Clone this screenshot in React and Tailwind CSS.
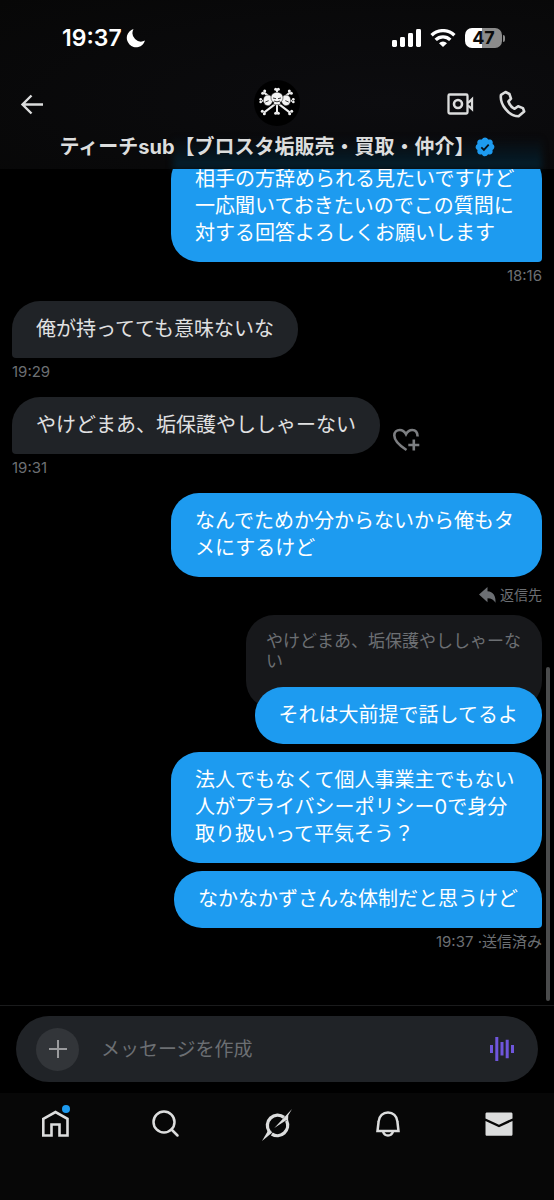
import React, { useState } from 'react';

const messages = [
  { id: 1, mine: true, tail: true, text: '相手の方辞められる見たいですけど一応聞いておきたいのでこの質問に対する回答よろしくお願いします', meta: '18:16' },
  { id: 2, mine: false, tail: true, text: '俺が持ってても意味ないな', meta: '19:29' },
  { id: 3, mine: false, tail: true, text: 'やけどまあ、垢保護やししゃーない', meta: '19:31', react: true },
  { id: 4, mine: true, text: 'なんでためか分からないから俺もタメにするけど' },
  { id: 5, mine: true, text: 'それは大前提で話してるよ', quote: 'やけどまあ、垢保護やししゃーない' },
  { id: 6, mine: true, text: '法人でもなくて個人事業主でもない人がプライバシーポリシー0で身分取り扱いって平気そう？' },
  { id: 7, mine: true, tail: true, text: 'なかなかずさんな体制だと思うけど', meta: '19:37 ·送信済み' },
];

function StatusBar() {
  return (
    <div className="flex h-[76px] items-center justify-between pr-[49px] pl-[62px] text-white">
      <div className="flex items-center gap-1">
        <span className="text-[23px] leading-7 font-semibold">19:37</span>
        <svg width="20" height="20" viewBox="0 0 20 20" fill="currentColor">
          <path d="M7.5 1A9.3 9.3 0 1 0 19 12.6 8.6 8.6 0 0 1 7.5 1Z" />
        </svg>
      </div>
      <div className="flex items-center gap-[9px]">
        <svg width="29" height="18" viewBox="0 0 29 18" fill="currentColor">
          <rect x="0" y="11" width="5" height="7" rx="1.4" />
          <rect x="8" y="8" width="5" height="10" rx="1.4" />
          <rect x="16" y="4" width="5" height="14" rx="1.4" />
          <rect x="24" y="0" width="5" height="18" rx="1.4" />
        </svg>
        <svg width="26" height="18" viewBox="0 0 26 18" fill="none" stroke="currentColor" strokeWidth="3.4">
          <path d="M1.6 6.3a16.3 16.3 0 0 1 22.8 0" />
          <path d="M5.7 10.9a10.4 10.4 0 0 1 14.6 0" />
          <path d="M13 18 9 14.200a5.8 5.8 0 0 1 8 0Z" fill="currentColor" stroke="none" />
        </svg>
        <div className="flex items-center gap-px">
          <div className="flex h-5 w-[37px] items-center justify-center rounded-[7px] bg-linear-to-r from-white from-47% to-[#8b8b8b] to-47% text-[18px] leading-5 font-bold text-[#0b0b0b]">
            47
          </div>
          <div className="h-[7px] w-[2px] rounded-r-full bg-[#8b8b8b]" />
        </div>
      </div>
    </div>
  );
}

function Avatar() {
  return (
    <svg width="46" height="46" viewBox="0 0 138 138">
      <circle cx="69" cy="69" r="69" fill="#000" />
      <path d="M69 30v68M30 38l78 60M108 38l-78 60M24 62h90" fill="none" stroke="#eee" strokeWidth="6" />
      <g fill="#eee">
        <circle cx="65" cy="28" r="4.5" /><circle cx="73" cy="28" r="4.5" />
        <circle cx="65" cy="100" r="4.5" /><circle cx="73" cy="100" r="4.5" />
        <circle cx="26" cy="40" r="4.5" /><circle cx="32" cy="33" r="4.5" />
        <circle cx="112" cy="40" r="4.5" /><circle cx="106" cy="33" r="4.5" />
        <circle cx="25" cy="94" r="4.5" /><circle cx="31" cy="101" r="4.5" />
        <circle cx="113" cy="94" r="4.5" /><circle cx="107" cy="101" r="4.5" />
        <circle cx="20" cy="58" r="4" /><circle cx="20" cy="66" r="4" />
        <circle cx="118" cy="58" r="4" /><circle cx="118" cy="66" r="4" />
      </g>
      <g fill="#f4f4f4" stroke="#000" strokeWidth="1.5">
        <path d="M28 60c0-9 6-15 14-15s14 6 14 14c0 12-8 18-15 18-8 0-13-8-13-17Z" />
        <path d="M110 60c0-9-6-15-14-15s-14 6-14 14c0 12 8 18 15 18 8 0 13-8 13-17Z" />
        <path d="M69 37c11 0 18 7 18 16 0 7-3 11-8 13v8H59v-8c-5-2-8-6-8-13 0-9 7-16 18-16Z" />
      </g>
      <g fill="none" stroke="#111" strokeWidth="2.5">
        <path d="M57 54l9 2M81 54l-9 2M60 63q9 5 18 0M34 66l10-4M104 66l-10-4" />
      </g>
    </svg>
  );
}

function Header() {
  return (
    <header className="relative h-[169px] shrink-0 bg-[#070707] bg-radial-[at_70%_60%] from-[#0c0c0f] to-[#070707] text-[#dcdddd]">
      <div className="absolute right-3 bottom-0 h-8 w-2/3 bg-linear-to-b from-transparent to-[#04202f] blur-[3px]" />
      <StatusBar />
      <div className="relative grid grid-cols-3 items-center px-5">
        <button type="button" aria-label="戻る" className="justify-self-start">
          <svg width="24" height="24" viewBox="0 0 24 24" fill="none" stroke="currentColor" strokeWidth="2.4">
            <path d="M23 12.500H2.500M11.500 3.500l-9 9 9 9" />
          </svg>
        </button>
        <div className="justify-self-center pt-1 pb-[6px]"><Avatar /></div>
        <div className="flex items-center gap-6 justify-self-end pr-2">
          <button type="button" aria-label="ビデオ通話">
            <svg width="28" height="24" viewBox="0 0 28 24" fill="none" stroke="currentColor" strokeWidth="2.300">
              <rect x="2.500" y="2.500" width="19" height="19" rx="1.200" />
              <circle cx="12" cy="12" r="4" strokeWidth="2.600" />
              <path d="M22 11l4-3.800v10L22 13.500" />
            </svg>
          </button>
          <button type="button" aria-label="音声通話">
            <svg width="28" height="28" viewBox="0 0 28 28" fill="none" stroke="currentColor" strokeWidth="2.600" strokeLinejoin="round">
              <path d="M7.500 2 3 4.800C1.500 13.800 10.500 26.300 20.600 26.200l5.600-4.800-1.300-3.300-4.800-1.800-3.500 2.500c-2.500-1.200-5.200-4.400-6.200-7.300l2.600-2.800-1.600-4.700Z" />
            </svg>
          </button>
        </div>
      </div>
      <h1 className="relative flex h-[30px] items-center justify-center text-[20px] leading-[30px] font-bold whitespace-nowrap">
        ティーチsub【ブロスタ垢販売・買取・仲介】
        <svg width="20" height="20" viewBox="1 1 20 20">
          <path
            fill="#1d9bf0"
            d="M20.4 11c0-.65-.17-1.27-.5-1.82-.33-.55-.8-1-1.36-1.28.24-.6.29-1.26.16-1.9-.13-.63-.43-1.2-.88-1.67-.46-.45-1.04-.75-1.67-.88-.63-.13-1.29-.08-1.9.16A3.6 3.6 0 0 0 11 1.6a3.6 3.6 0 0 0-3.24 2.02c-.6-.24-1.27-.3-1.9-.16-.64.13-1.22.43-1.68.88-.45.46-.74 1.04-.87 1.67s-.07 1.3.17 1.9A3.6 3.6 0 0 0 1.6 11c0 .65.2 1.28.54 1.83.34.55.8.99 1.4 1.27-.24.6-.3 1.26-.17 1.9.13.63.42 1.2.87 1.67.46.45 1.04.74 1.67.87s1.29.07 1.89-.17c.27.59.71 1.08 1.26 1.43.55.34 1.18.53 1.83.55a3.6 3.6 0 0 0 3.22-1.98c.6.24 1.27.3 1.9.16.64-.12 1.23-.43 1.69-.89.46-.46.76-1.04.89-1.68.13-.64.07-1.3-.17-1.9.57-.28 1.04-.72 1.37-1.27.34-.55.52-1.17.54-1.82Z"
          />
          <path d="M7.300 11.300l2.600 2.600 4.800-5.200" fill="none" stroke="#06121c" strokeWidth="1.800" />
        </svg>
      </h1>
    </header>
  );
}

function Bubble({ message }) {
  const { mine, tail, text, meta, quote, react } = message;
  return (
    <div className={`flex flex-col ${mine ? 'items-end' : 'items-start'}`}>
      {quote && <>
        <div className="mb-[10px] flex h-5 items-center gap-1 text-[14px] leading-5 text-[#6c6f73]">
          <svg width="17" height="16" viewBox="0 0 17 16" fill="currentColor">
            <path d="M8.5 0v4.200c5.600.5 8.500 4.600 8 11.600-1.500-3-4-4.500-8-4.600v4L0 7.600Z" />
          </svg>
          返信先
        </div>
        <blockquote className="-mb-[22px] max-w-[296px] rounded-[28px] bg-[#17181b] px-5 pt-4 pb-[38px] text-[17px] leading-5 text-[#6c6f73]">
          {quote}
        </blockquote>
      </>}
      <div className={`flex w-full items-end gap-3 ${mine ? 'justify-end' : ''}`}>
        <p className={`relative max-w-[70%] rounded-[28px] px-6 py-[15px] text-[20px] leading-[27px] ${mine ? 'bg-[#1d9bf0] text-white' : 'bg-[#202327] text-[#e0e1e2]'} ${tail ? (mine ? 'rounded-br-[4px]' : 'rounded-bl-[4px]') : ''}`}>
          {text}
        </p>
        {react && (
          <button type="button" aria-label="リアクションを追加" className="text-[#7c7e81]">
            <svg width="28" height="26" viewBox="0 0 28 26" fill="none" stroke="currentColor" strokeWidth="2.600">
              <path d="M14.500 22C6 16.500 2.300 12 2.300 7.500c0-3.400 2.500-5.500 5.500-5.500 2.700 0 4.800 1.600 6.200 4.200C15.400 3.600 17.500 2 20.200 2c3 0 5.300 2.200 5.400 6.500" />
              <path d="M21.800 11.500v11M16.300 17h11" />
            </svg>
          </button>
        )}
      </div>
      {meta && <span className="mt-1 text-[15px] leading-5 text-[#6c6f73]">{meta}</span>}
    </div>
  );
}

function Composer() {
  const [draft, setDraft] = useState('');
  return (
    <form onSubmit={e => e.preventDefault()} className="shrink-0 border-t border-[#1a1b1c] px-4 pt-[10px] pb-[11px]">
      <div className="flex h-[66px] items-center rounded-full bg-[#202327] pr-6 pl-5">
        <button type="button" aria-label="添付" className="flex size-[43px] shrink-0 items-center justify-center rounded-full bg-[#323539] text-[#9a9b9d]">
          <svg width="18" height="18" viewBox="0 0 18 18" fill="none" stroke="currentColor" strokeWidth="2">
            <path d="M9 0v18M0 9h18" />
          </svg>
        </button>
        <input
          type="text"
          aria-label="メッセージを作成"
          placeholder="メッセージを作成"
          value={draft}
          onChange={e => setDraft(e.target.value)}
          className="ml-[22px] min-w-0 flex-1 bg-transparent pt-[2px] text-[19px] leading-7 text-white outline-none placeholder:text-[#6c6f73]"
        />
        <button type="button" aria-label="音声メッセージ" className="text-[#6f56dc]">
          <svg width="24" height="24" viewBox="0 0 24 24" fill="currentColor">
            <path d="M0 8h3v8H0zM5.300 0h3v24h-3zM10.500 5h3v13.500h-3zM15.700 2.700h3v18.600h-3zM21 8h3v8h-3z" />
          </svg>
        </button>
      </div>
    </form>
  );
}

function TabBar() {
  const item = 'flex justify-center';
  return (
    <nav className="grid h-[107px] shrink-0 grid-cols-5 items-start bg-[#070707] pt-4 text-[#dcdddd]">
      <a href="#home" aria-label="ホーム" className={item}>
        <span className="relative">
          <svg width="30" height="30" viewBox="0 0 30 30" fill="none" stroke="currentColor" strokeWidth="2.600">
            <path d="M3.300 9.800 15.500 3l12 6.800v16.700h-8v-11h-8v11H3.300Z" />
          </svg>
          <span className="absolute -top-1 right-0 size-2 rounded-full bg-[#1d9bf0]" />
        </span>
      </a>
      <a href="#search" aria-label="検索" className={item}>
        <svg width="30" height="30" viewBox="0 0 30 30" fill="none" stroke="currentColor" strokeWidth="2.500">
          <circle cx="13" cy="13" r="10.500" />
          <path d="M20.500 20.500l6 6" strokeLinecap="round" />
        </svg>
      </a>
      <a href="#grok" aria-label="Grok" className={item}>
        <svg width="34" height="34" viewBox="8 9 34 34">
          <g fill="none" stroke="currentColor" strokeWidth="3.300">
            <path d="M17.200 31.400A10.300 10.300 0 0 1 32 17.400" />
            <path d="M34.600 20.800A10.300 10.300 0 0 1 19.800 34" />
          </g>
          <g fill="currentColor">
            <path d="M10 41 15.800 31l3.200-.5 1 2.200Z" />
            <path d="M40 9 22.300 28 34.200 20.200l1.800 1.500.3-6.500Z" />
          </g>
        </svg>
      </a>
      <a href="#notifications" aria-label="通知" className={item}>
        <svg width="30" height="30" viewBox="0 0 30 30" fill="none" stroke="currentColor" strokeWidth="2.500">
          <path d="M4.500 22 5.600 12.500C6.100 7 10 3.500 15 3.500s8.900 3.500 9.400 9L25.500 22Z" />
          <path d="M10 22.500c.8 2.600 2.700 4 5 4s4.200-1.400 5-4" />
        </svg>
      </a>
      <a href="#messages" aria-label="メッセージ" className={item}>
        <svg width="30" height="30" viewBox="0 0 30 30" fill="currentColor">
          <path d="M1.500 5c0-1 .6-1.500 1.500-1.500h24c.9 0 1.500.5 1.500 1.500v4.400L15 15.700 1.500 9.400ZM1.500 12 15 18.200l13.500-6.200v13.300c0 1-.6 1.500-1.500 1.500H3c-.9 0-1.500-.5-1.500-1.500Z" />
        </svg>
      </a>
    </nav>
  );
}

export default function App() {
  return (
    <div className="flex h-screen flex-col bg-black font-['Inter','Noto_Sans_CJK_JP',sans-serif]">
      <Header />
      <main className="relative flex min-h-0 flex-1 flex-col justify-end overflow-hidden">
        <ul className="flex flex-col px-3 pb-[53px]">
          {messages.map((m, i) => {
            const previous = messages[i - 1];
            const gap = !previous ? '' : previous.meta ? 'mt-[15px]' : 'mt-2';
            return <li key={m.id} className={gap}><Bubble message={m} /></li>;
          })}
        </ul>
        <div className="absolute right-1 bottom-1 h-2/5 w-1 rounded-full bg-[#4a4b4c]" />
      </main>
      <Composer />
      <TabBar />
    </div>
  );
}
